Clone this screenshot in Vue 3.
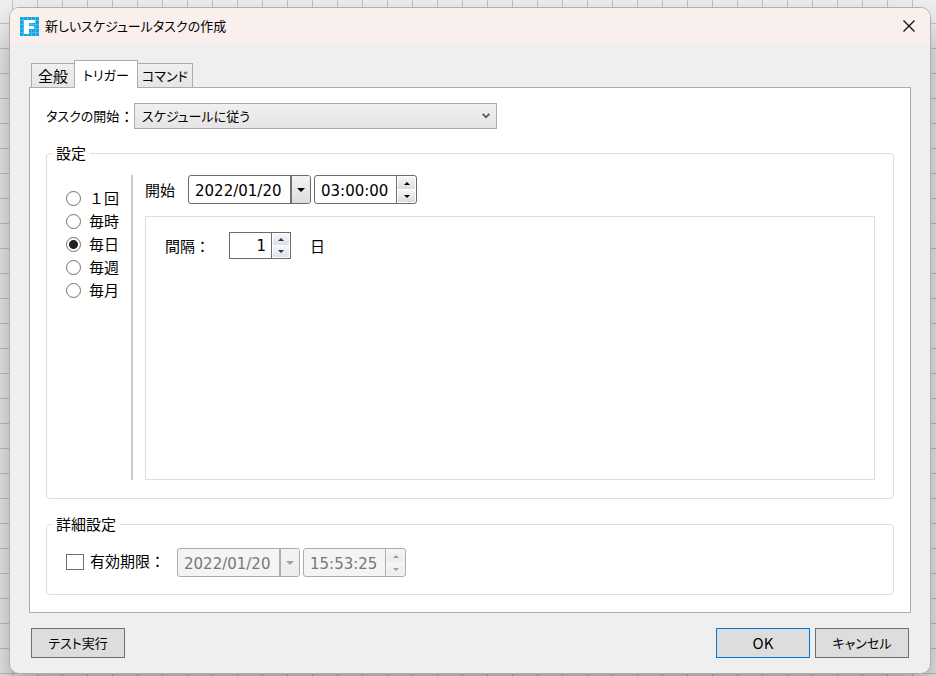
<script setup>
import { ref } from 'vue'

const tabs = ['全般', 'トリガー', 'コマンド']
const activeTab = ref('トリガー')
const trigger = ref('スケジュールに従う')
const cycles = ['１回', '毎時', '毎日', '毎週', '毎月']
const cycle = ref('毎日')
const startDate = ref('2022/01/20')
const startTime = ref('03:00:00')
const interval = ref('1')
const expires = ref(false)
const endDate = ref('2022/01/20')
const endTime = ref('15:53:25')
</script>

<template>
  <div class="desktop">
    <section class="window" role="dialog" aria-labelledby="dialog-title">
      <header class="titlebar">
        <svg class="logo" viewBox="0 0 19 19" aria-hidden="true">
          <rect width="19" height="19" fill="#12a5e3" />
          <path d="M0 3.5H19M0 7.5H19M0 11.5H19M0 15.5H19M3.5 0V19M7.5 0V19M11.5 0V19M15.5 0V19" stroke="#4cbdee" stroke-width="1" />
          <path d="M4 3H15V6H9V9H14V12H9V17H4Z" fill="#fff" />
        </svg>
        <h1 id="dialog-title" class="title kana">新しいスケジュールタスクの作成</h1>
        <button class="close" type="button" aria-label="閉じる">
          <svg viewBox="0 0 12 12" aria-hidden="true">
            <path d="M0.500 0.500L11.500 11.500M11.500 0.500L0.500 11.500" stroke="#111" stroke-width="1.300" fill="none" />
          </svg>
        </button>
      </header>

      <main class="content">
        <div class="tabs" role="tablist">
          <button
            v-for="tab in tabs"
            :key="tab"
            type="button"
            role="tab"
            class="tab kana"
            :class="{ active: tab === activeTab }"
            :aria-selected="tab === activeTab"
            @click="activeTab = tab"
          >{{ tab }}</button>
        </div>

        <div class="panel" role="tabpanel">
          <div class="trigger-row">
            <label for="trigger"><span class="kana">タスクの開始</span><span>：</span></label>
            <div class="select-box">
              <select id="trigger" v-model="trigger" class="kana">
                <option>スケジュールに従う</option>
              </select>
              <svg class="chevron" viewBox="0 0 8 6" aria-hidden="true">
                <path d="M0.700 0.800L4 4.300L7.300 0.800" stroke="#555" stroke-width="1.800" fill="none" />
              </svg>
            </div>
          </div>

          <fieldset class="group settings">
            <legend>設定</legend>
            <div class="cycles">
              <label v-for="item in cycles" :key="item" class="option">
                <input v-model="cycle" type="radio" name="cycle" :value="item" />
                <span>{{ item }}</span>
              </label>
            </div>
            <div class="schedule">
              <div class="start-row">
                <label for="start-date">開始</label>
                <div class="pickers">
                  <div class="field">
                    <input id="start-date" v-model="startDate" type="text" class="date" />
                    <button type="button" class="drop" aria-label="日付を選択">
                      <svg viewBox="0 0 8 4" aria-hidden="true"><path d="M0 0H8L4 4Z" /></svg>
                    </button>
                  </div>
                  <div class="field">
                    <input v-model="startTime" type="text" class="time" aria-label="開始時刻" />
                    <span class="spin">
                      <button type="button" aria-label="進める"><svg viewBox="0 0 6 3" aria-hidden="true"><path d="M0 3H6L3 0Z" /></svg></button>
                      <button type="button" aria-label="戻す"><svg viewBox="0 0 6 3" aria-hidden="true"><path d="M0 0H6L3 3Z" /></svg></button>
                    </span>
                  </div>
                </div>
              </div>
              <div class="detail">
                <label for="interval">間隔：</label>
                <div class="field number">
                  <input id="interval" v-model="interval" type="text" />
                  <span class="spin blue">
                    <button type="button" aria-label="増やす"><svg viewBox="0 0 6 3" aria-hidden="true"><path d="M0 3H6L3 0Z" /></svg></button>
                    <button type="button" aria-label="減らす"><svg viewBox="0 0 6 3" aria-hidden="true"><path d="M0 0H6L3 3Z" /></svg></button>
                  </span>
                </div>
                <span>日</span>
              </div>
            </div>
          </fieldset>

          <fieldset class="group advanced">
            <legend>詳細設定</legend>
            <label class="expiry">
              <input v-model="expires" type="checkbox" />
              <span>有効期限：</span>
            </label>
            <div class="pickers">
              <div class="field" :class="{ disabled: !expires }">
                <input v-model="endDate" type="text" class="date" aria-label="期限日" :disabled="!expires" />
                <button type="button" class="drop" aria-label="日付を選択" :disabled="!expires">
                  <svg viewBox="0 0 8 4" aria-hidden="true"><path d="M0 0H8L4 4Z" /></svg>
                </button>
              </div>
              <div class="field" :class="{ disabled: !expires }">
                <input v-model="endTime" type="text" class="time" aria-label="期限時刻" :disabled="!expires" />
                <span class="spin">
                  <button type="button" aria-label="進める" :disabled="!expires"><svg viewBox="0 0 6 3" aria-hidden="true"><path d="M0 3H6L3 0Z" /></svg></button>
                  <button type="button" aria-label="戻す" :disabled="!expires"><svg viewBox="0 0 6 3" aria-hidden="true"><path d="M0 0H6L3 3Z" /></svg></button>
                </span>
              </div>
            </div>
          </fieldset>
        </div>
      </main>

      <footer class="actions">
        <button type="button" class="push kana">テスト実行</button>
        <span class="spacer"></span>
        <button type="button" class="push primary">OK</button>
        <button type="button" class="push kana">キャンセル</button>
      </footer>
    </section>
  </div>
</template>

<style>
body {
  margin: 0;
}
</style>

<style scoped>
* {
  box-sizing: border-box;
}

.desktop {
  display: flex;
  min-height: 100vh;
  padding: 7px 5px 2px 9px;
  background-color: #f0f0f0;
  background-image:
    linear-gradient(to right, #c4c4c4 1px, transparent 1px),
    linear-gradient(to bottom, #c4c4c4 1px, transparent 1px);
  background-size: 25px 25px;
  background-position: 12px 23px;
  color: #000;
  font-family: "Noto Sans CJK JP", sans-serif;
  font-size: 15px;
  line-height: 20px;
}

button,
input,
select {
  margin: 0;
  padding: 0;
  border: 0;
  border-radius: 0;
  color: inherit;
  font: inherit;
}

.kana {
  font-size: 13px;
  font-feature-settings: "palt";
}

.window {
  display: flex;
  flex: 1;
  flex-direction: column;
  overflow: hidden;
  border: 1px solid #b0b0b0;
  border-radius: 10px;
  background: #efefef;
  box-shadow: 0 20px 36px rgba(0, 0, 0, 0.36);
}

.titlebar {
  display: flex;
  align-items: center;
  height: 36px;
  padding: 0 15px 0 10px;
  background: #f9f0ee;
}

.logo {
  width: 19px;
  height: 19px;
  margin-right: 6px;
}

.title {
  flex: 1;
  margin: 0;
  font-weight: 400;
}

.close {
  display: flex;
  background: none;
}

.close svg {
  width: 12px;
  height: 12px;
}

.content {
  display: flex;
  flex: 1;
  flex-direction: column;
  padding: 16px 19px 0;
}

.tabs {
  display: flex;
  align-items: flex-end;
  padding-left: 2px;
}

.tab {
  height: 24px;
  padding: 0 5px;
  border: 1px solid #acacac;
  border-bottom: 0;
  background: linear-gradient(#f0f0f0, #e5e5e5);
  white-space: nowrap;
}

.tab:first-child {
  padding: 0 6px;
  border-right: 0;
  font-size: 15px;
}

.tab:last-child {
  padding: 0 4px;
  border-left: 0;
}

.tab.active {
  z-index: 1;
  height: 28px;
  margin-bottom: -1px;
  padding: 0 8px;
  background: #fff;
}

.panel {
  display: flex;
  flex: 1;
  flex-direction: column;
  padding: 15px 16px 17px;
  border: 1px solid #acacac;
  background: #fff;
}

.trigger-row {
  display: flex;
  align-items: center;
  margin-bottom: 14px;
}

.trigger-row label {
  display: flex;
  width: 88px;
  white-space: nowrap;
}

.select-box {
  position: relative;
  flex: 0 1 363px;
}

select {
  display: block;
  width: 100%;
  height: 26px;
  padding: 0 24px 0 7px;
  border: 1px solid #acacac;
  background: linear-gradient(#f0f0f0, #e5e5e5);
  appearance: none;
}

.chevron {
  position: absolute;
  top: 10px;
  right: 7px;
  width: 8px;
  height: 6px;
  pointer-events: none;
}

.group {
  display: flex;
  min-width: 0;
  margin: 0;
  border: 1px solid #d5dfe5;
  border-radius: 4px;
}

legend {
  margin-left: 5px;
  padding: 0 4px;
}

.settings {
  flex: 1;
  margin-bottom: 15px;
  padding: 12px 18px 18px 0;
}

.cycles {
  display: flex;
  flex-direction: column;
  width: 86px;
  padding: 12px 0 0 19px;
  border-right: 2px solid #cbcbcb;
}

.option {
  display: flex;
  align-items: center;
  gap: 8px;
  height: 23px;
  white-space: nowrap;
}

.option span,
.expiry span {
  padding-bottom: 2px;
}

.option input {
  flex: none;
  width: 15px;
  height: 15px;
  border: 1px solid #707070;
  border-radius: 50%;
  background: #fff;
  appearance: none;
}

.option input:checked {
  background: radial-gradient(circle, #212121 4px, #fff 5px);
}

.schedule {
  display: flex;
  flex: 1;
  flex-direction: column;
  gap: 12px;
  padding-left: 12px;
}

.start-row {
  display: flex;
  align-items: center;
  gap: 13px;
}

.pickers {
  display: flex;
  gap: 3px;
}

.field {
  display: flex;
  height: 29px;
  overflow: hidden;
  border: 1px solid #6b6b6b;
  border-radius: 3px;
  background: #fff;
}

.field input {
  padding: 2px 0 0 6px;
  background: none;
  font-family: "DejaVu Sans", sans-serif;
}

.field .date {
  width: 101px;
}

.field .time {
  width: 81px;
}

.drop {
  display: flex;
  align-items: center;
  justify-content: center;
  width: 20px;
  border-left: 2px solid #707070;
  background: linear-gradient(#f4f4f4, #dddddd);
}

.drop svg {
  width: 8px;
  height: 4px;
}

.spin {
  display: flex;
  flex-direction: column;
  gap: 1px;
  width: 20px;
  padding: 1px;
  border-left: 1px solid #707070;
}

.spin button {
  display: flex;
  flex: 1;
  align-items: center;
  justify-content: center;
  background: linear-gradient(#f6f6f6, #dcdcdc);
}

.spin svg {
  width: 6px;
  height: 3px;
}

.blue {
  fill: #1d3557;
}

.blue button {
  background: linear-gradient(#f5f7f9, #dce1e6);
}

.disabled {
  border-color: #acacac;
  background: #f4f4f4;
  color: #777;
  fill: #a0a0a0;
}

.disabled .drop,
.disabled .spin {
  border-color: #acacac;
}

.disabled .drop,
.disabled .spin button {
  background: linear-gradient(#f4f4f4, #ececec);
}

.detail {
  display: flex;
  flex: 1;
  align-items: flex-start;
  padding: 15px 19px;
  border: 1px solid #d5dfe5;
  line-height: 27px;
}

.detail label {
  width: 64px;
}

.number {
  height: 27px;
  margin-right: 19px;
  border-radius: 0;
}

.number input {
  width: 41px;
  padding: 2px 5px 0 0;
  text-align: right;
}

.number .spin {
  width: 19px;
}

.advanced {
  align-items: center;
  padding: 14px 18px 17px 0;
}

.expiry {
  display: flex;
  align-items: center;
  gap: 6px;
  width: 130px;
  padding: 0 0 2px 19px;
  white-space: nowrap;
}

.expiry input {
  flex: none;
  width: 18px;
  height: 16px;
  border: 1px solid #707070;
  background: #fff;
  appearance: none;
}

.expiry input:checked {
  background: #444;
}

.actions {
  display: flex;
  gap: 5px;
  padding: 15px 21px 15px;
}

.spacer {
  flex: 1;
}

.push {
  width: 94px;
  height: 30px;
  border: 1px solid #707070;
  background: #ddd;
}

.primary {
  border-color: #0078d7;
}
</style>
